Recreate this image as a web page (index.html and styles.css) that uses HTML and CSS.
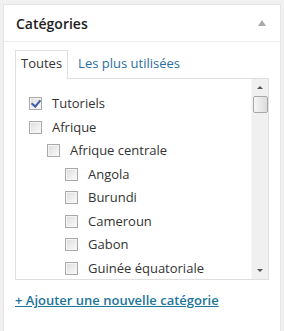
FILE: index.html
```html
<!DOCTYPE html>
<html lang="fr">
<head>
    <meta charset="UTF-8">
    <title>Catégories</title>
    <link rel="stylesheet" href="styles.css">
</head>
<body>
    <div class="postbox">
        <div class="postbox-header">
            <h3>Catégories</h3>
            <span class="toggle"></span>
        </div>
        <div class="inside">
            <ul class="tabs">
                <li class="tab active">Toutes</li>
                <li class="tab"><a href="#">Les plus utilisées</a></li>
            </ul>
            <div class="panel">
                <ul class="checklist">
                    <li><label><span class="check checked"></span>Tutoriels</label></li>
                    <li><label><span class="check"></span>Afrique</label>
                        <ul class="children">
                            <li><label><span class="check"></span>Afrique centrale</label>
                                <ul class="children">
                                    <li><label><span class="check"></span>Angola</label></li>
                                    <li><label><span class="check"></span>Burundi</label></li>
                                    <li><label><span class="check"></span>Cameroun</label></li>
                                    <li><label><span class="check"></span>Gabon</label></li>
                                    <li><label><span class="check"></span>Guinée équatoriale</label></li>
                                </ul>
                            </li>
                        </ul>
                    </li>
                </ul>
                <div class="scrollbar">
                    <span class="arrow up"></span>
                    <span class="thumb"></span>
                    <span class="track"></span>
                    <span class="arrow down"></span>
                </div>
            </div>
            <a class="add-link" href="#">+ Ajouter une nouvelle catégorie</a>
        </div>
    </div>
</body>
</html>
```

FILE: styles.css
```css
body {
    margin: 0;
    padding: 4px 3px;
    background: #f1f1f1;
    font-family: "Open Sans", sans-serif;
    font-size: 13px;
    color: #444;
}

.postbox {
    width: 276px;
    background: #fff;
    border: 1px solid #e5e5e5;
    box-shadow: 0 1px 1px rgba(0, 0, 0, 0.04);
}

.postbox-header {
    display: flex;
    align-items: center;
    justify-content: space-between;
    height: 36px;
    padding: 0 12px;
    border-bottom: 1px solid #eee;
}

.postbox-header h3 {
    margin: 0;
    font-size: 14px;
    font-weight: 600;
    color: #222;
}

.toggle {
    width: 0;
    height: 0;
    border-left: 4px solid transparent;
    border-right: 4px solid transparent;
    border-bottom: 6px solid #aaa;
    margin-right: 2px;
}

.inside {
    padding: 8px 11px 25px 11px;
}

.tabs {
    display: flex;
    margin: 0;
    padding: 0;
    list-style: none;
}

.tab {
    padding: 3px 5px 5px;
    line-height: 19px;
    border: 1px solid transparent;
    border-bottom: none;
}

.tab.active {
    border-color: #dfdfdf;
    background: #fff;
    color: #333;
    position: relative;
    z-index: 1;
    margin-bottom: -1px;
    padding-bottom: 6px;
}

.tab a {
    color: #2a6f9e;
    text-decoration: none;
    padding-left: 4px;
}

.panel {
    display: flex;
    height: 200px;
    border: 1px solid #dfdfdf;
    overflow: hidden;
}

.checklist {
    flex: 1;
    margin: 0;
    padding: 13px 0 0 13px;
    list-style: none;
}

.checklist ul {
    margin: 0;
    padding: 0 0 0 18px;
    list-style: none;
}

.checklist li {
    line-height: 23.5px;
}

.checklist label {
    display: flex;
    align-items: center;
    color: #333;
}

.check {
    width: 11px;
    height: 11px;
    border: 1px solid #a9a9a9;
    background: linear-gradient(135deg, #dcdcdc, #fbfbfb);
    box-shadow: inset 0 0 0 1px #f4f4f4;
    margin-right: 10px;
    position: relative;
}

.check.checked::before {
    content: "";
    position: absolute;
    left: 3px;
    top: 0;
    width: 4px;
    height: 7px;
    border-right: 2px solid #3d5ea8;
    border-bottom: 2px solid #3d5ea8;
    transform: rotate(40deg);
}

.scrollbar {
    width: 16px;
    display: flex;
    flex-direction: column;
    align-items: center;
    background: #f0f0f0;
    border-left: 1px solid #f7f7f7;
}

.arrow {
    width: 0;
    height: 0;
    margin: 7px 0;
    border-left: 3px solid transparent;
    border-right: 3px solid transparent;
}

.arrow.up {
    border-bottom: 3px solid #555;
}

.arrow.down {
    border-top: 3px solid #555;
}

.thumb {
    width: 13px;
    height: 15px;
    border: 1px solid #a8a8a8;
    border-radius: 2px;
    background: linear-gradient(90deg, #f6f6f6, #dcdcdc);
}

.track {
    flex: 1;
}

.add-link {
    display: inline-block;
    margin-top: 11px;
    font-weight: 600;
    color: #21759b;
    text-decoration: underline;
    line-height: 18px;
}
```
